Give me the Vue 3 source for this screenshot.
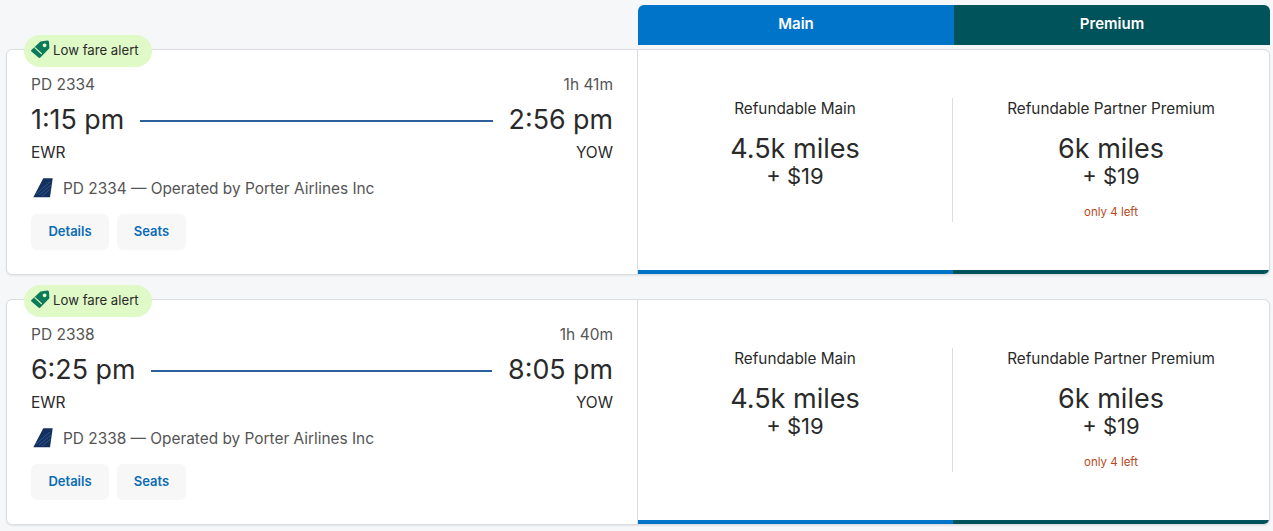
<template>
  <div class="page">
    <div class="cabins">
      <div class="cabin main">Main</div>
      <div class="cabin premium">Premium</div>
    </div>

    <div v-for="f in flights" :key="f.number" class="card">
      <div class="alert">
        <svg class="alert-icon" width="20" height="20" viewBox="0 0 20 20">
          <path fill="#0b7a5a" fill-rule="evenodd" d="M10.5 1.6 L17.2 .6 Q18.8 .5 19 2 L19.4 8.2 L10.4 17.6 Q9.6 18.4 8.8 17.8 L1.4 11.6 Q.6 10.8 1.4 10 Z M14.6 3.4 a1.9 1.9 0 1 0 .01 0 Z" />
          <path stroke="#dff9c7" stroke-width="1.1" d="M4.6 7.4 L11.8 14" />
        </svg>
        <span>Low fare alert</span>
      </div>
      <div class="info">
        <div class="row small">
          <span>{{ f.number }}</span>
          <span>{{ f.duration }}</span>
        </div>
        <div class="row times">
          <span>{{ f.depart }}</span>
          <span class="route"></span>
          <span>{{ f.arrive }}</span>
        </div>
        <div class="row airports">
          <span>EWR</span>
          <span>YOW</span>
        </div>
        <div class="operator">
          <svg class="tail" width="20" height="20" viewBox="0 0 20 20">
            <path fill="#14305f" d="M10.3 .3 H19.7 L17 19.3 H.3 Z" />
            <path stroke="#3f6fa8" stroke-width=".6" fill="none" d="M3 16 L17 4 M6 17 L18 7 M9 18 L17.5 11" />
          </svg>
          <span>{{ f.number }} — Operated by Porter Airlines Inc</span>
        </div>
        <div class="actions">
          <button class="action details">Details</button>
          <button class="action seats">Seats</button>
        </div>
      </div>
      <div class="fares">
        <div class="fare main-fare">
          <div class="fare-body">
            <div class="fare-name">Refundable Main</div>
            <div class="miles">4.5k miles</div>
            <div class="cash">+ $19</div>
          </div>
        </div>
        <div class="fare premium-fare">
          <div class="fare-body">
            <div class="fare-name">Refundable Partner Premium</div>
            <div class="miles">6k miles</div>
            <div class="cash">+ $19</div>
            <div class="left">only 4 left</div>
          </div>
        </div>
      </div>
    </div>
  </div>
</template>

<script setup>
const flights = [
  { number: 'PD 2334', duration: '1h 41m', depart: '1:15 pm', arrive: '2:56 pm' },
  { number: 'PD 2338', duration: '1h 40m', depart: '6:25 pm', arrive: '8:05 pm' }
]
</script>

<style>
html, body {
  margin: 0;
  background: #f6f7f9;
}
</style>

<style scoped>
.page {
  box-sizing: border-box;
  height: 531px;
  padding: 5px 3px 0 6px;
  overflow: hidden;
  font-family: Inter, "Liberation Sans", sans-serif;
  color: #2a2a2a;
}

.cabins {
  display: flex;
  margin-left: 632px;
  height: 40px;
}

.cabin {
  flex: 1;
  display: flex;
  align-items: center;
  justify-content: center;
  padding-bottom: 4px;
  box-sizing: border-box;
  color: #fff;
  font-size: 15px;
  font-weight: 600;
}

.main {
  background: #0074c8;
  border-top-left-radius: 6px;
}

.premium {
  background: #00535a;
  border-top-right-radius: 6px;
}

.card {
  position: relative;
  display: flex;
  box-sizing: border-box;
  height: 226px;
  margin-top: 4px;
  margin-bottom: 24px;
  background: #fff;
  border: 1px solid #dcdde0;
  border-radius: 6px;
  box-shadow: 0 1px 2px rgba(0, 0, 0, 0.08);
}

.alert {
  position: absolute;
  left: 17px;
  top: -15px;
  display: flex;
  align-items: center;
  gap: 3px;
  box-sizing: border-box;
  height: 32px;
  padding: 0 13px 2px 6px;
  border-radius: 16px;
  background: #dff9c7;
  font-size: 13.2px;
}

.info {
  box-sizing: border-box;
  width: 631px;
  padding: 25px 24px 0 24px;
  border-right: 1px solid #dcdde0;
}

.row {
  display: flex;
  justify-content: space-between;
  align-items: center;
}

.small {
  font-size: 15.5px;
  color: #555;
  height: 18px;
}

.times {
  margin-top: 9px;
  height: 34px;
  font-size: 26.8px;
  gap: 16px;
}

.route {
  flex: 1;
  height: 2px;
  margin-top: 4px;
  background: #2d5f9a;
}

.airports {
  margin-top: 7px;
  height: 18px;
  font-size: 15.5px;
}

.operator {
  display: flex;
  align-items: center;
  gap: 10px;
  margin-top: 17px;
  height: 20px;
  font-size: 15.4px;
  color: #555;
}

.tail {
  margin-left: 2px;
}

.actions {
  display: flex;
  gap: 8px;
  margin-top: 16px;
}

.action {
  box-sizing: border-box;
  height: 36px;
  padding: 0 0 2px;
  border: 0;
  border-radius: 6px;
  background: #f7f7f7;
  color: #0a6cb5;
  font-family: inherit;
  font-size: 13px;
  font-weight: 600;
}

.details {
  width: 78px;
}

.seats {
  width: 69px;
}

.fares {
  flex: 1;
  display: flex;
  overflow: hidden;
  border-bottom-right-radius: 5px;
}

.fare {
  flex: 1;
  box-sizing: border-box;
  padding-top: 48px;
  border-bottom: 4px solid;
}

.main-fare {
  flex: none;
  width: 315px;
  border-bottom-color: #0074c8;
}

.premium-fare {
  border-bottom-color: #00535a;
}

.fare-body {
  height: 124px;
  text-align: center;
}

.main-fare .fare-body {
  border-right: 1px solid #dcdde0;
}

.fare-name {
  font-size: 15.3px;
  line-height: 22px;
}

.miles {
  margin-top: 14px;
  font-size: 27px;
  line-height: 30px;
}

.cash {
  margin-top: -1px;
  font-size: 22px;
  line-height: 26px;
}

.left {
  margin-top: 16px;
  font-size: 11.5px;
  color: #b8471b;
}
</style>
